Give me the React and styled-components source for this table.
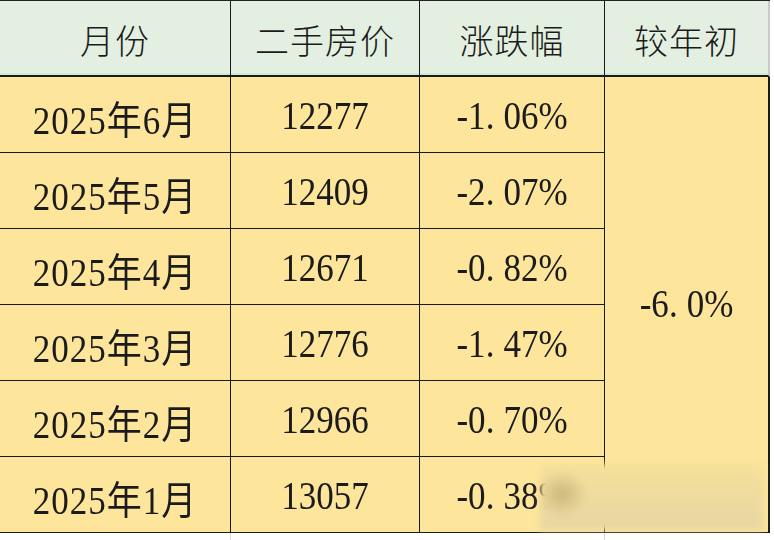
import React from "react";
import styled, { createGlobalStyle } from "styled-components";

const rows = [
  { month: "2025年6月", price: "12277", change: "-1.06%" },
  { month: "2025年5月", price: "12409", change: "-2.07%" },
  { month: "2025年4月", price: "12671", change: "-0.82%" },
  { month: "2025年3月", price: "12776", change: "-1.47%" },
  { month: "2025年2月", price: "12966", change: "-0.70%" },
  { month: "2025年1月", price: "13057", change: "-0.38%" },
];

function Percent({ value }) {
  const [whole, frac] = value.split(".");
  return (
    <Tall>
      {whole}
      <Dot>.</Dot>
      {frac}
    </Tall>
  );
}

export default function App() {
  return (
    <Page>
      <GlobalStyle />
      <Sheet>
        <Table>
          <HeadCell>月份</HeadCell>
          <HeadCell>二手房价</HeadCell>
          <HeadCell>涨跌幅</HeadCell>
          <HeadCell $last>较年初</HeadCell>
          {rows.map((r, i) => (
            <React.Fragment key={r.month}>
              <Cell><Tall $wide>{r.month}</Tall></Cell>
              <Cell><Tall>{r.price}</Tall></Cell>
              <Cell><Percent value={r.change} /></Cell>
              {i === 0 && (
                <MergedCell>
                  <Percent value="-6.0%" />
                </MergedCell>
              )}
            </React.Fragment>
          ))}
        </Table>
        <Watermark />
      </Sheet>
    </Page>
  );
}

const GlobalStyle = createGlobalStyle`
  html, body {
    margin: 0;
    padding: 0;
    background: #ffffff;
  }
`;

const Page = styled.div`
  width: 774px;
  height: 540px;
  overflow: hidden;
  background: #ffffff;
  background-image:
    linear-gradient(to right, transparent 230px, #dadada 230px, #dadada 231px, transparent 231px),
    linear-gradient(to right, transparent 604px, #dadada 604px, #dadada 605px, transparent 605px);
`;

const Sheet = styled.div`
  position: relative;
  width: 770px;
`;

const Table = styled.div`
  display: grid;
  grid-template-columns: 231px 189px 185px 165px;
  grid-template-rows: 76px repeat(6, 76px);
  border-top: 1px solid #222;
  box-sizing: border-box;
  font-family: "Liberation Serif", "Noto Sans CJK SC", serif;
  color: #1b1b1b;
`;

const HeadCell = styled.div`
  display: flex;
  align-items: center;
  justify-content: center;
  background: #e3f0e1;
  border-right: ${(p) => (p.$last ? "2px solid #c9c9c9" : "1.5px solid #1a1a1a")};
  border-bottom: 2px solid #1a1a1a;
  box-shadow: inset 0 -2px 0 #d2e8d6;
  font-family: "Noto Sans CJK SC", serif;
  font-weight: 300;
  font-size: 34px;
  letter-spacing: 1px;
  padding-top: 2px;
  box-sizing: border-box;
`;

const Cell = styled.div`
  display: flex;
  align-items: center;
  justify-content: center;
  background: #fde59c;
  border-right: 1.5px solid #1a1a1a;
  border-bottom: 1.5px solid #1a1a1a;
  font-size: 35px;
  padding-top: 4px;
  box-sizing: border-box;
`;

const Tall = styled.span`
  display: inline-block;
  letter-spacing: ${(p) => (p.$wide ? "1px" : "0")};
  transform: scaleY(1.12);
`;

const Dot = styled.span`
  margin-right: 9px;
`;

const MergedCell = styled(Cell)`
  grid-column: 4;
  grid-row: 2 / span 6;
  border-right: 2px solid #1a1a1a;
  padding-top: 0;
`;

const Watermark = styled.div`
  position: absolute;
  left: 540px;
  top: 464px;
  width: 223px;
  height: 66px;
  background:
    radial-gradient(ellipse 26px 24px at 22px 30px, rgba(200, 180, 120, 0.9), transparent),
    linear-gradient(to bottom, #f6e09a, #e6d6a4);
  filter: blur(3px);
`;
